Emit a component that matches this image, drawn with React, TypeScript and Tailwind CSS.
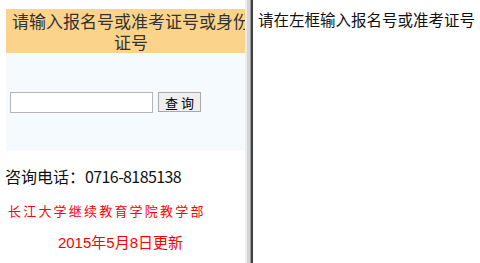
const cjk = { fontFamily: '"Noto Sans CJK SC", "Liberation Sans", sans-serif' };

function LeftFrame() {
  return (
    <div className="w-[245px] h-full overflow-hidden bg-white shrink-0" style={cjk}>
      <div className="pl-[6px] pt-[9px] w-[260px]">
        <div className="w-[250px] bg-[#fcd38b] text-center text-[#333] text-[17px] leading-[21px] px-[3px] py-[1px]">
          请输入报名号或准考证号或身份证号
        </div>
        <div className="w-[250px] h-[98px] bg-[#f5faff] flex items-center pl-[4px] gap-[5px]">
          <input className="w-[143px] h-[21px] bg-white border border-[#b5b5b5] outline-none" />
          <button className="w-[43px] h-[20px] bg-[#efefef] border border-[#a9a9a9] text-[13px] leading-none text-black tracking-[3px] pl-[3px]">
            查询
          </button>
        </div>
      </div>
      <div className="pl-[5px] mt-[14px] text-[16px] leading-[22px] text-[#111]">
        咨询电话：<span className="tracking-[-0.6px]">0716-8185138</span>
      </div>
      <div className="pl-[8px] mt-[15px] text-[13px] leading-[18px] text-[#ff0000] tracking-[2.2px]">
        长江大学继续教育学院教学部
      </div>
      <div className="mt-[12px] text-center pr-[4px] text-[15px] leading-[20px] text-[#ff0000]">
        <span style={{ fontFamily: '"Liberation Sans", sans-serif' }}>2015</span>年
        <span style={{ fontFamily: '"Liberation Sans", sans-serif' }}>5</span>月
        <span style={{ fontFamily: '"Liberation Sans", sans-serif' }}>8</span>日更新
      </div>
    </div>
  );
}

function Divider() {
  return (
    <div className="flex h-full shrink-0">
      <div className="w-[2px] bg-[#ededed]" />
      <div className="w-[3px] bg-[#d4d4d4]" />
      <div className="w-[1px] bg-[#9a9a9a]" />
      <div className="w-[2px] bg-[#404040]" />
    </div>
  );
}

export default function App() {
  return (
    <div className="w-[480px] h-[263px] flex bg-white overflow-hidden">
      <LeftFrame />
      <Divider />
      <div className="flex-1 bg-white pl-[5px] pt-[8px] text-[15.5px] leading-[22px] text-[#111] whitespace-nowrap overflow-hidden" style={cjk}>
        请在左框输入报名号或准考证号
      </div>
    </div>
  );
}
